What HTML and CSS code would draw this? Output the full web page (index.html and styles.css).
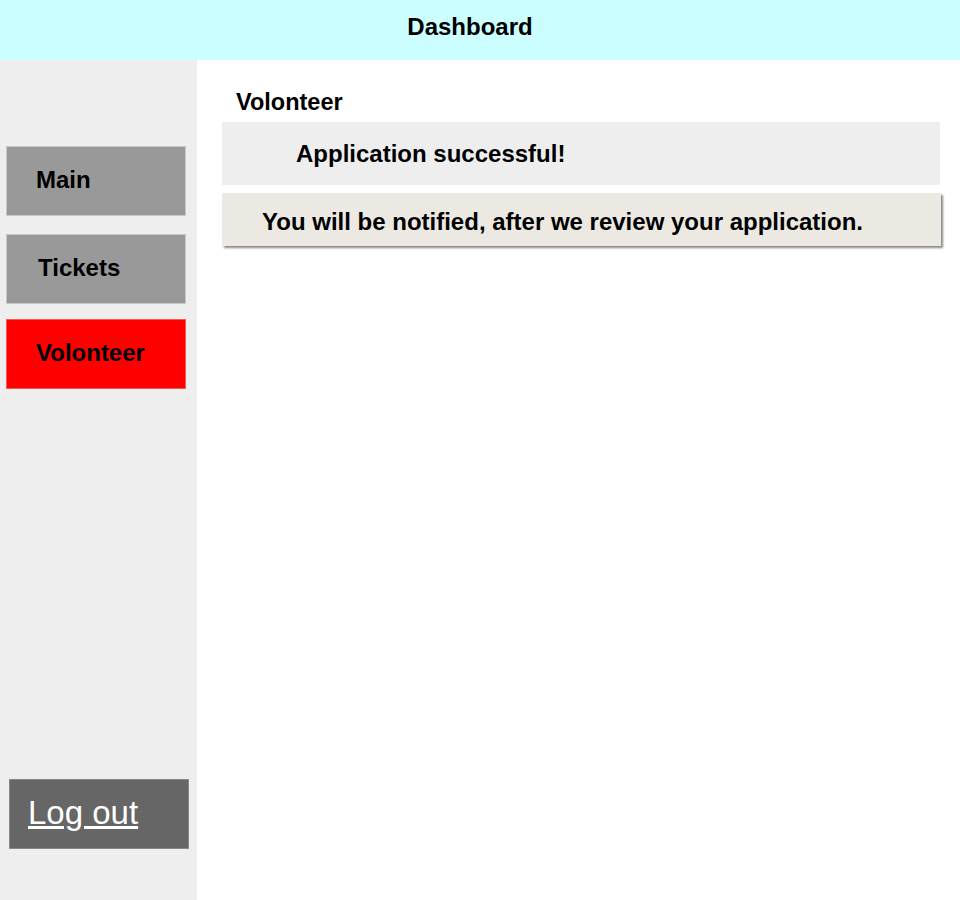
FILE: index.html
```html
<!DOCTYPE html>
<html>
<head>
<meta charset="utf-8">
<link rel="stylesheet" href="styles.css">
</head>
<body>
<div class="app">
  <header class="topbar"><span class="title">Dashboard</span></header>
  <div class="body">
    <aside class="sidebar">
      <nav class="nav">
        <div class="nav-item">Main</div>
        <div class="nav-item tickets">Tickets</div>
        <div class="nav-item active">Volonteer</div>
      </nav>
      <div class="logout"><a href="#">Log out</a></div>
    </aside>
    <main class="content">
      <h2 class="heading">Volonteer</h2>
      <div class="box success">Application successful!</div>
      <div class="box notice">You will be notified, after we review your application.</div>
    </main>
  </div>
</div>
</body>
</html>
```
FILE: styles.css
```css
html, body {
  margin: 0;
  padding: 0;
  height: 100%;
}
body {
  font-family: "Liberation Sans", Arial, sans-serif;
  color: #000;
  background: #fff;
}
.app {
  display: flex;
  flex-direction: column;
  height: 900px;
}
.topbar {
  height: 60px;
  flex: 0 0 60px;
  background: #ccffff;
  display: flex;
  align-items: center;
  justify-content: center;
  padding-right: 20px;
  padding-bottom: 6px;
  box-sizing: border-box;
}
.title {
  font-size: 24px;
  font-weight: bold;
}
.body {
  flex: 1;
  display: flex;
}
.sidebar {
  width: 197px;
  flex: 0 0 197px;
  background: #eeeeee;
  display: flex;
  flex-direction: column;
}
.nav {
  display: flex;
  flex-direction: column;
  padding-top: 86px;
}
.nav-item {
  width: 180px;
  height: 70px;
  box-sizing: border-box;
  margin-left: 6px;
  background: #999999;
  border: 1px solid #c8c8c8;
  font-size: 24px;
  font-weight: bold;
  display: flex;
  align-items: center;
  padding-left: 29px;
  padding-bottom: 2px;
}
.nav-item.tickets {
  margin-top: 18px;
  padding-left: 31px;
}
.nav-item.active {
  margin-top: 15px;
  background: #ff0000;
  border-color: #ff5555;
}
.logout {
  margin-top: auto;
  margin-bottom: 51px;
  margin-left: 9px;
  width: 180px;
  height: 70px;
  box-sizing: border-box;
  background: #666666;
  border: 1px solid #888;
  display: flex;
  align-items: center;
  padding-left: 18px;
  padding-bottom: 3px;
}
.logout a {
  color: #fff;
  font-size: 33px;
  text-decoration: underline;
}
.content {
  flex: 1;
  padding: 0 20px 0 25px;
}
.heading {
  margin: 0;
  padding-top: 28px;
  padding-left: 14px;
  font-size: 23.5px;
  line-height: 28px;
  height: 34px;
  font-weight: bold;
}
.box {
  font-size: 24px;
  font-weight: bold;
  display: flex;
  align-items: center;
  box-sizing: border-box;
}
.success {
  height: 63px;
  background: #eeeeee;
  padding-left: 74px;
}
.notice {
  margin-top: 8px;
  height: 53px;
  margin-right: -1px;
  background: #ece9e3;
  padding-left: 40px;
  padding-top: 4px;
  box-shadow: 2px 2px 2px #8a8a8a;
}
```
